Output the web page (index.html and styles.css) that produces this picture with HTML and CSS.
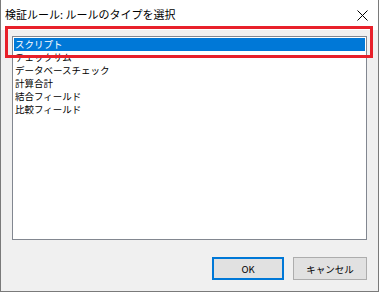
FILE: index.html
```html
<!DOCTYPE html>
<html lang="ja">
<head>
<meta charset="utf-8">
<link rel="stylesheet" href="styles.css">
</head>
<body>
<div class="window">
  <div class="titlebar">
    <span class="title">検証ルール: ルールのタイプを選択</span>
    <svg class="close" width="11" height="11" viewBox="0 0 11 11"><path d="M0.5 0.5 L10.5 10.5 M10.5 0.5 L0.5 10.5" stroke="#000" stroke-width="1" fill="none"/></svg>
  </div>
  <div class="content">
    <ul class="list">
      <li class="item selected">スクリプト</li>
      <li class="item">チェックサム</li>
      <li class="item">データベースチェック</li>
      <li class="item">計算合計</li>
      <li class="item">結合フィールド</li>
      <li class="item">比較フィールド</li>
    </ul>
    <div class="buttons">
      <button class="btn btn-default">OK</button>
      <button class="btn btn-cancel">キャンセル</button>
    </div>
  </div>
  <div class="highlight"></div>
</div>
</body>
</html>
```
FILE: styles.css
```css
html, body {
  margin: 0;
  padding: 0;
}
body {
  font-family: "Noto Sans CJK JP", "Noto Sans", sans-serif;
  color: #000;
  background: #f0f0f0;
}
.window {
  position: relative;
  width: 379px;
  height: 292px;
  box-sizing: border-box;
  border: 1px solid #7a7a7a;
  border-top: none;
  background: #f0f0f0;
  display: flex;
  flex-direction: column;
}
.titlebar {
  height: 30px;
  flex: none;
  background: #fff;
  display: flex;
  align-items: center;
  justify-content: space-between;
  padding: 0 10px 0 4px;
}
.title {
  font-size: 11px;
  line-height: 14px;
  margin-top: -2px;
}
.close {
  display: block;
  margin-top: 0;
}
.content {
  flex: 1;
  display: flex;
  flex-direction: column;
  padding: 6px 11px 0 11px;
}
.list {
  list-style: none;
  margin: 0;
  height: 204px;
  box-sizing: border-box;
  border: 1px solid #828790;
  background: #fff;
  padding: 1px;
}
.item {
  height: 13px;
  line-height: 13px;
  font-size: 9.5px;
  padding-left: 1px;
  white-space: nowrap;
}
.selected {
  background: #0078d7;
  color: #fff;
}
.buttons {
  display: flex;
  justify-content: flex-end;
  gap: 9px;
  margin-top: 17px;
}
.btn {
  height: 23px;
  box-sizing: border-box;
  background: #e1e1e1;
  border: 1px solid #adadad;
  font-family: "Noto Sans CJK JP", "Noto Sans", sans-serif;
  font-size: 9.5px;
  color: #000;
  padding: 0;
  margin: 0;
}
.btn-default {
  width: 72px;
  border: 2px solid #0078d7;
}
.btn-cancel {
  width: 74px;
}
.highlight {
  position: absolute;
  left: 4px;
  top: 26px;
  width: 368px;
  height: 32px;
  box-sizing: border-box;
  border: 3px solid #e8202a;
}
```
